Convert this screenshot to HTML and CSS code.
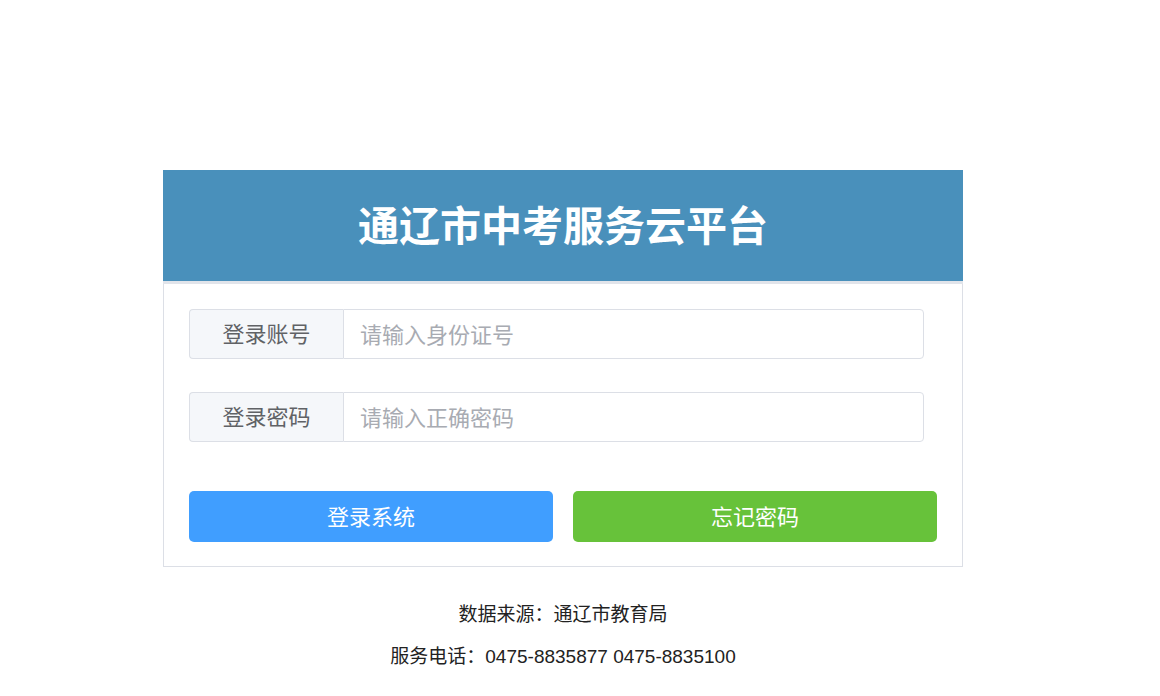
FILE: index.html
```html
<!DOCTYPE html>
<html lang="zh">
<head>
<meta charset="utf-8">
<title>通辽市中考服务云平台</title>
<link rel="stylesheet" href="styles.css">
</head>
<body>
<div class="page">
  <div class="card">
    <div class="card-head">通辽市中考服务云平台</div>
    <div class="card-body">
      <div class="field">
        <div class="prepend">登录账号</div>
        <input class="input" type="text" placeholder="请输入身份证号">
      </div>
      <div class="field">
        <div class="prepend">登录密码</div>
        <input class="input" type="password" placeholder="请输入正确密码">
      </div>
      <div class="actions">
        <button class="btn btn-primary">登录系统</button>
        <button class="btn btn-success">忘记密码</button>
      </div>
    </div>
  </div>
  <div class="footer">
    <p>数据来源：通辽市教育局</p>
    <p>服务电话：0475-8835877 0475-8835100</p>
  </div>
</div>
</body>
</html>
```

FILE: styles.css
```css
html, body {
  margin: 0;
  padding: 0;
  background: #fff;
}
body {
  font-family: "Liberation Sans", "Noto Sans CJK SC", sans-serif;
}
.page {
  width: 800px;
  margin: 0 0 0 163px;
  padding-top: 170px;
}
.card-head {
  height: 111px;
  background: #4990bb;
  color: #fff;
  font-family: "Noto Sans CJK SC", sans-serif;
  font-weight: 700;
  font-size: 41px;
  line-height: 106px;
  text-align: center;
  border-bottom: 3px solid #e1e4ea;
}
.card-body {
  border: 1px solid #dcdfe6;
  border-top: none;
  padding: 25px 25px 24px 25px;
}
.field {
  display: flex;
  width: 735px;
  height: 50px;
  margin-bottom: 33px;
  box-sizing: border-box;
}
.prepend {
  width: 154px;
  flex: none;
  box-sizing: border-box;
  background: #f5f7fa;
  border: 1px solid #dcdfe6;
  border-right: none;
  border-radius: 4px 0 0 4px;
  color: #606266;
  font-family: "Noto Sans CJK SC", sans-serif;
  font-size: 22px;
  line-height: 45px;
  text-align: center;
}
.input {
  flex: 1;
  min-width: 0;
  box-sizing: border-box;
  height: 50px;
  border: 1px solid #dcdfe6;
  border-radius: 0 4px 4px 0;
  padding: 0 16px 3px 16px;
  font-family: "Noto Sans CJK SC", sans-serif;
  font-size: 22px;
  color: #606266;
  outline: none;
  background: #fff;
}
.input::placeholder {
  color: #a8abb2;
}
.actions {
  display: flex;
  gap: 20px;
  padding-top: 16px;
}
.btn {
  flex: 1;
  height: 51px;
  border: none;
  border-radius: 5px;
  color: #fff;
  font-family: "Noto Sans CJK SC", sans-serif;
  font-size: 22px;
  padding: 0 0 3px 0;
  cursor: pointer;
}
.btn-primary {
  background: #409eff;
}
.btn-success {
  background: #67c23a;
}
.footer {
  text-align: center;
  color: #222;
  font-size: 19px;
  padding-top: 27px;
}
.footer p {
  margin: 0;
  line-height: 42px;
}
```
